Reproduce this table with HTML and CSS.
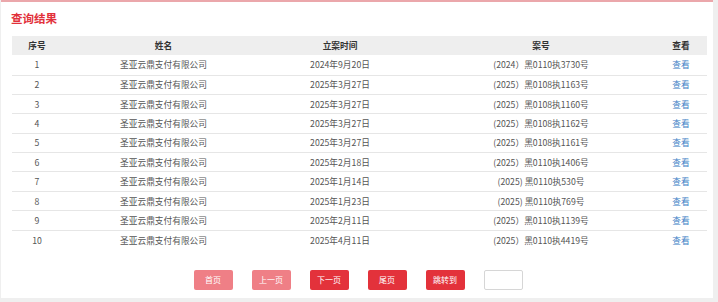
FILE: index.html
```html
<!DOCTYPE html>
<html lang="zh-CN">
<head>
<meta charset="utf-8">
<title>查询结果</title>
<link rel="stylesheet" href="styles.css">
</head>
<body>
<div class="card">
  <h2 class="title">查询结果</h2>
  <table class="result">
    <colgroup>
      <col class="c1"><col class="c2"><col class="c3"><col class="c4"><col class="c5">
    </colgroup>
    <thead>
      <tr><th>序号</th><th>姓名</th><th>立案时间</th><th>案号</th><th class="last">查看</th></tr>
    </thead>
    <tbody>
      <tr><td>1</td><td>圣亚云鼎支付有限公司</td><td>2024年9月20日</td><td>(2024）黑0110执3730号</td><td class="last"><a>查看</a></td></tr>
      <tr><td>2</td><td>圣亚云鼎支付有限公司</td><td>2025年3月27日</td><td>(2025）黑0108执1163号</td><td class="last"><a>查看</a></td></tr>
      <tr><td>3</td><td>圣亚云鼎支付有限公司</td><td>2025年3月27日</td><td>(2025）黑0108执1160号</td><td class="last"><a>查看</a></td></tr>
      <tr><td>4</td><td>圣亚云鼎支付有限公司</td><td>2025年3月27日</td><td>(2025）黑0108执1162号</td><td class="last"><a>查看</a></td></tr>
      <tr><td>5</td><td>圣亚云鼎支付有限公司</td><td>2025年3月27日</td><td>(2025）黑0108执1161号</td><td class="last"><a>查看</a></td></tr>
      <tr><td>6</td><td>圣亚云鼎支付有限公司</td><td>2025年2月18日</td><td>(2025）黑0110执1406号</td><td class="last"><a>查看</a></td></tr>
      <tr><td>7</td><td>圣亚云鼎支付有限公司</td><td>2025年1月14日</td><td>(2025) 黑0110执530号</td><td class="last"><a>查看</a></td></tr>
      <tr><td>8</td><td>圣亚云鼎支付有限公司</td><td>2025年1月23日</td><td>(2025) 黑0110执769号</td><td class="last"><a>查看</a></td></tr>
      <tr><td>9</td><td>圣亚云鼎支付有限公司</td><td>2025年2月11日</td><td>(2025）黑0110执1139号</td><td class="last"><a>查看</a></td></tr>
      <tr><td>10</td><td>圣亚云鼎支付有限公司</td><td>2025年4月11日</td><td>(2025）黑0110执4419号</td><td class="last"><a>查看</a></td></tr>
    </tbody>
  </table>
  <div class="pager">
    <button class="btn disabled">首页</button>
    <button class="btn disabled">上一页</button>
    <button class="btn">下一页</button>
    <button class="btn">尾页</button>
    <button class="btn">跳转到</button>
    <input class="jump" type="text">
  </div>
</div>
</body>
</html>
```

FILE: styles.css
```css
html, body {
  margin: 0;
  padding: 0;
}
body {
  background: #efefef;
  font-family: "Noto Sans CJK SC", "Noto Sans", sans-serif;
  width: 718px;
  height: 302px;
  overflow: hidden;
}
.card {
  box-sizing: border-box;
  margin-left: 1px;
  width: 712px;
  height: 298px;
  background: #fff;
  border-top: 2px solid #eba7ab;
  padding: 0 6px 0 10px;
  display: flex;
  flex-direction: column;
}
.title {
  margin: 8px 0 0 0;
  height: 26px;
  font-size: 11.5px;
  line-height: 16px;
  font-weight: bold;
  color: #e2313b;
}
.result {
  margin-left: 1px;
  width: 695px;
  border-collapse: collapse;
  table-layout: fixed;
  font-size: 8.7px;
  color: #555;
}
.c1 { width: 50px; }
.c2 { width: 203px; }
.c3 { width: 150px; }
.c4 { width: 252px; }
.c5 { width: 40px; }
.result th {
  background: #eeeeee;
  height: 19px;
  padding: 0;
  font-weight: bold;
  color: #333;
  text-align: center;
}
.result td {
  height: 19.4px;
  padding: 0;
  text-align: center;
  border-bottom: 1px solid #e6e6e6;
  box-sizing: border-box;
}
.result tbody tr:first-child td { height: 20px; }
.result tbody tr:last-child td { border-bottom: none; }
.result .last { padding-right: 12px; }
.result a {
  color: #3d7fc6;
  cursor: pointer;
}
.pager {
  margin-top: 20px;
  display: flex;
  justify-content: center;
  gap: 19px;
  padding-right: 2px;
}
.btn {
  width: 39px;
  height: 20px;
  border: none;
  border-radius: 2px;
  background: #e3323b;
  color: #fff;
  font-family: inherit;
  font-size: 8px;
  padding: 0;
}
.btn.disabled {
  background: #ef7f86;
}
.jump {
  box-sizing: border-box;
  width: 39px;
  height: 20px;
  border: 1px solid #d6d6d6;
  border-radius: 2px;
  padding: 0;
}
```
